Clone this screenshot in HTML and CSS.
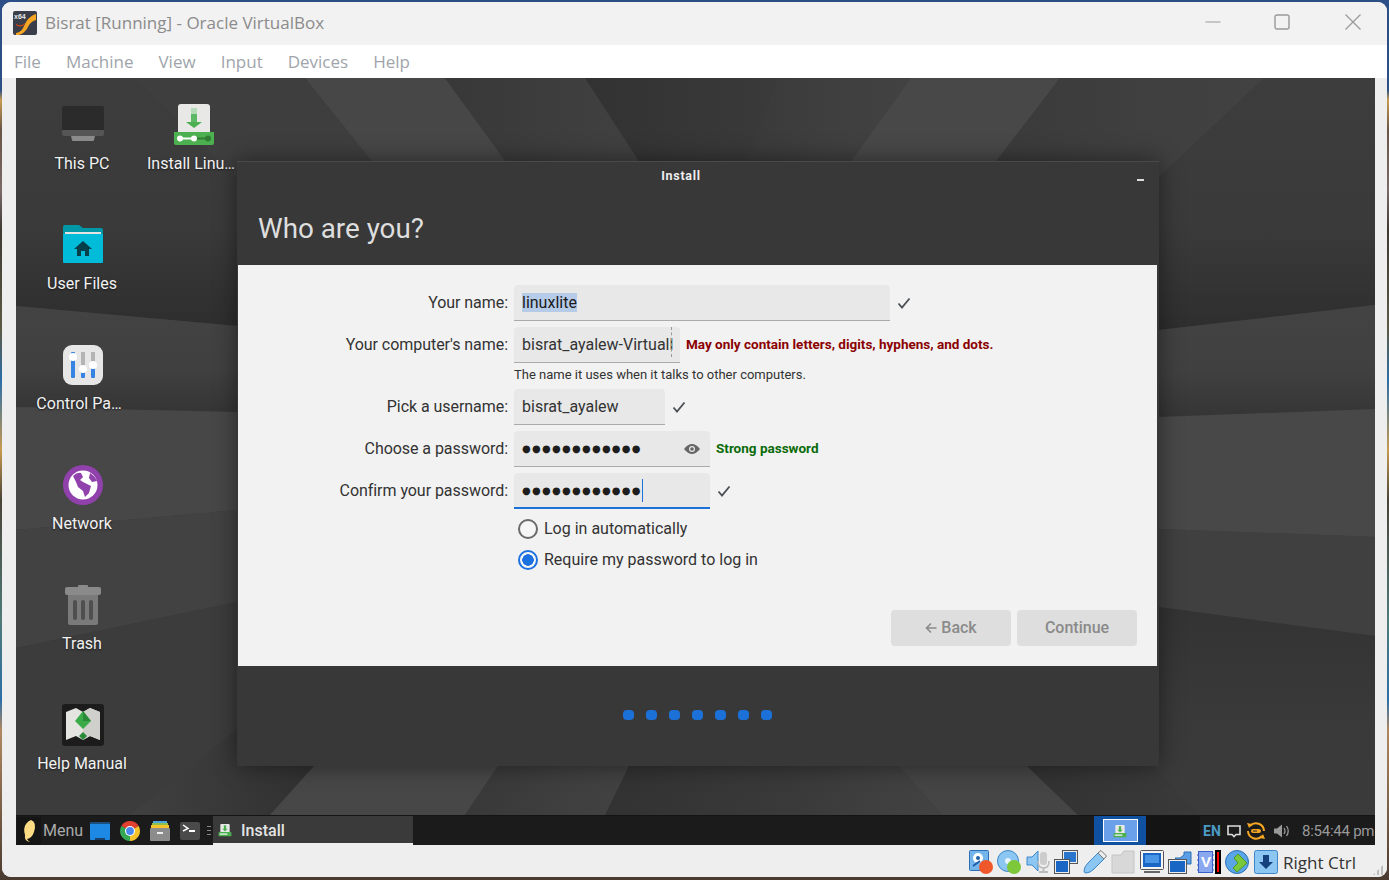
FILE: index.html
```html
<!doctype html>
<html lang="en">
<head>
	<meta charset="utf-8">
	<title>Bisrat [Running] - Oracle VirtualBox</title>
	<link rel="stylesheet" href="styles.css">
</head>
<body>
<div class="window">

	<div class="titlebar">
		<svg class="app-icon" viewBox="0 0 24 24">
			<rect width="24" height="24" rx="2" fill="#3a3d4a"/>
			<path d="M3 22 C9 21 10 17 12 13 C14 9 17 5 23 3 L23 9 C19 10 17 12 15 16 C13 20 9 24 5 24 L3 24 Z" fill="#f6a623"/>
			<path d="M3 13 Q8 16 12 12 L11 14 Q7 17 3 14 Z" fill="#d9480f"/>
			<text x="1" y="8" class="app-icon-text">x64</text>
		</svg>
		<span class="title">Bisrat [Running] - Oracle VirtualBox</span>
		<div class="win-buttons">
			<svg width="16" height="16" viewBox="0 0 16 16"><path d="M0.5 8H15.5" stroke="#999" stroke-width="1" fill="none"/></svg>
			<svg width="16" height="16" viewBox="0 0 16 16"><rect x="1" y="1" width="14" height="14" rx="2" stroke="#999" stroke-width="1.4" fill="none"/></svg>
			<svg width="16" height="16" viewBox="0 0 16 16"><path d="M0.5 0.5L15.5 15.5M15.5 0.5L0.5 15.5" stroke="#999" stroke-width="1.2" fill="none"/></svg>
		</div>
	</div>

	<div class="menubar">
		<span>File</span><span>Machine</span><span>View</span><span>Input</span><span>Devices</span><span>Help</span>
	</div>

	<div class="desktop">
		<svg class="wallpaper" viewBox="16 78 1359 767" preserveAspectRatio="none">
			<defs>
				<linearGradient id="toDark" x1="0" y1="0" x2="1" y2="0"><stop offset="0" stop-color="#404040"/><stop offset="1" stop-color="#313131"/></linearGradient>
				<linearGradient id="fromDark" x1="0" y1="0" x2="1" y2="0"><stop offset="0" stop-color="#383838"/><stop offset="0.6" stop-color="#3f3f3f"/><stop offset="1" stop-color="#424242"/></linearGradient>
				<linearGradient id="valley" x1="0" y1="0" x2="1" y2="0"><stop offset="0" stop-color="#323232"/><stop offset="1" stop-color="#3a3a3a"/></linearGradient>
				<linearGradient id="downDark" x1="0" y1="0" x2="0" y2="1"><stop offset="0" stop-color="#3d3d3d"/><stop offset="0.6" stop-color="#3a3a3a"/><stop offset="1" stop-color="#2e2e2e"/></linearGradient>
				<linearGradient id="downMid" x1="0" y1="0" x2="0" y2="1"><stop offset="0" stop-color="#434343"/><stop offset="0.6" stop-color="#404040"/><stop offset="1" stop-color="#353535"/></linearGradient>
				<linearGradient id="downSoft" x1="0" y1="0" x2="0" y2="1"><stop offset="0" stop-color="#333333"/><stop offset="0.5" stop-color="#393939"/><stop offset="1" stop-color="#3b3b3b"/></linearGradient>
			</defs>
			<rect x="16" y="78" width="1359" height="767" fill="#3a3a3a"/>
			<!-- top rays -->
			<polygon points="16,78 134,78 300,240 237,326 16,306" fill="url(#downDark)"/>
			<polygon points="134,78 305,78 435,240 300,240" fill="#3e3e3e"/>
			<polygon points="305,78 445,78 563,240 435,240" fill="#474747"/>
			<polygon points="445,78 585,78 690,240 563,240" fill="url(#fromDark)"/>
			<polygon points="585,78 778,78 717,240 690,240" fill="url(#valley)"/>
			<polygon points="778,78 911,78 794,240 717,240" fill="url(#fromDark)"/>
			<polygon points="911,78 1060,78 936,240 794,240" fill="#484848"/>
			<polygon points="1060,78 1264,78 1092,240 936,240" fill="url(#fromDark)"/>
			<!-- right bands -->
			<polygon points="1264,78 1375,78 1375,305 1159,330 1092,240" fill="url(#downDark)"/>
			<polygon points="1159,330 1375,305 1375,409 1159,417" fill="url(#downMid)"/>
			<polygon points="1159,417 1375,409 1375,537 1159,529" fill="#484848"/>
			<polygon points="1159,529 1375,537 1375,636 1159,607" fill="#404040"/>
			<polygon points="1159,607 1375,636 1375,815 1200,815 1154,766" fill="url(#downSoft)"/>
			<!-- left bands -->
			<polygon points="16,306 237,326 237,412 16,407" fill="url(#downMid)"/>
			<polygon points="16,407 237,412 237,510 16,530" fill="#474747"/>
			<polygon points="16,530 237,510 237,602 16,648" fill="#424242"/>
			<polygon points="16,648 237,602 237,729 130,815 16,815" fill="#3c3c3c"/>
			<!-- bottom rays -->
			<polygon points="130,815 237,729 237,766 314,766 270,815" fill="url(#toDark)"/>
			<polygon points="270,815 314,766 498,766 465,815" fill="#474747"/>
			<polygon points="465,815 498,766 629,766 605,815" fill="url(#fromDark)"/>
			<polygon points="605,815 629,766 769,766 795,815" fill="url(#valley)"/>
			<polygon points="795,815 769,766 899,766 942,815" fill="url(#fromDark)"/>
			<polygon points="942,815 899,766 1027,766 1078,815" fill="#454545"/>
			<polygon points="1078,815 1027,766 1154,766 1200,815" fill="url(#valley)"/>
		</svg>

		<div class="icons">
			<div class="icon">
				<svg width="48" height="48" viewBox="0 0 48 48">
					<rect x="3" y="5" width="42" height="29" rx="2" fill="#2b2b2b"/>
					<path d="M3 29H45V33a2 2 0 0 1-2 2H5a2 2 0 0 1-2-2Z" fill="#555"/>
					<path d="M12 35H36L35 39a1 1 0 0 1-1 1H14a1 1 0 0 1-1-1Z" fill="#8a8a8a"/>
				</svg>
				<span>This PC</span>
			</div>
			<div class="icon">
				<svg width="48" height="48" viewBox="0 0 48 48">
					<path d="M4 6a2 2 0 0 1 2-2H20L24 7H42a2 2 0 0 1 2 2V42H4Z" fill="#0097a7"/>
					<rect x="6" y="11" width="36" height="4" fill="#e4e4e4"/>
					<path d="M4 13H44V40a2 2 0 0 1-2 2H6a2 2 0 0 1-2-2Z" fill="#00bcd8"/>
					<path d="M24 20L33 28H30V35H26V30H22V35H18V28H15Z" fill="#063e4a"/>
				</svg>
				<span>User Files</span>
			</div>
			<div class="icon">
				<svg width="48" height="48" viewBox="0 0 48 48">
					<rect x="4" y="4" width="40" height="40" rx="9" fill="#e6e6e6"/>
					<rect x="12" y="11" width="4" height="26" rx="1" fill="#3584e4"/>
					<rect x="22" y="11" width="4" height="15" fill="#b4b4b4"/>
					<rect x="22" y="26" width="4" height="11" rx="1" fill="#3584e4"/>
					<rect x="32" y="11" width="4" height="11" fill="#b4b4b4"/>
					<rect x="32" y="22" width="4" height="15" rx="1" fill="#3584e4"/>
					<circle cx="14" cy="16" r="4" fill="#fff"/>
					<circle cx="24" cy="28" r="4" fill="#fff"/>
					<circle cx="34" cy="24" r="4" fill="#fff"/>
				</svg>
				<span class="trunc">Control Pa…</span>
			</div>
			<div class="icon">
				<svg width="48" height="48" viewBox="0 0 48 48">
					<circle cx="24" cy="24" r="20" fill="#9141ac"/>
					<circle cx="24" cy="24" r="14.5" fill="#fff"/>
					<path d="M14 15Q18 11 22 12L24 16L21 19L24 21L32 25L30 32L26 36L24 30L19 26L17 21Z" fill="#9141ac"/>
					<path d="M31 12Q36 15 38 20L33 21L30 17Z" fill="#9141ac"/>
				</svg>
				<span>Network</span>
			</div>
			<div class="icon">
				<svg width="48" height="48" viewBox="0 0 48 48">
					<rect x="19" y="4" width="10" height="4" rx="1" fill="#8a8a8a"/>
					<rect x="6" y="6" width="36" height="8" rx="2" fill="#8a8a8a"/>
					<path d="M9 14H39V42a2 2 0 0 1-2 2H11a2 2 0 0 1-2-2Z" fill="#7a7a7a"/>
					<rect x="14" y="19" width="4" height="20" rx="2" fill="#4f4f4f"/>
					<rect x="22" y="19" width="4" height="20" rx="2" fill="#4f4f4f"/>
					<rect x="30" y="19" width="4" height="20" rx="2" fill="#4f4f4f"/>
				</svg>
				<span>Trash</span>
			</div>
			<div class="icon">
				<svg width="48" height="48" viewBox="0 0 48 48">
					<rect x="3" y="3" width="42" height="42" rx="3" fill="#1c1c1c"/>
					<path d="M7 11L17 7L24 11L31 7L41 11V39L31 35L24 39L17 35L7 39Z" fill="#e4e4e0"/>
					<path d="M24 11L31 7L41 11V39L31 35L24 39Z" fill="#cfcfcb"/>
					<path d="M24 10L32 20L24 28L16 20Z" fill="#3bab4a"/>
					<path d="M24 10L32 20H24Z" fill="#2a8a38"/>
					<path d="M24 31L28 35L24 39L20 35Z" fill="#2a8a38"/>
				</svg>
				<span>Help Manual</span>
			</div>
			<div class="icon">
				<svg width="48" height="48" viewBox="0 0 48 48">
					<path d="M8 6a3 3 0 0 1 3-3H37a3 3 0 0 1 3 3V32H8Z" fill="#e8e8e6"/>
					<rect x="21" y="7" width="6" height="6" fill="#b5dcb8"/>
					<rect x="21" y="13" width="6" height="8" fill="#5db865"/>
					<path d="M16 21H32L24 27Z" fill="#4caf50"/>
					<path d="M4 31H44V42a2 2 0 0 1-2 2H6a2 2 0 0 1-2-2Z" fill="#4caf50"/>
					<path d="M10 37.500H24" stroke="#fff" stroke-width="2"/>
					<path d="M24 37.500H38" stroke="#2e7d32" stroke-width="2"/>
					<circle cx="10" cy="37.500" r="3" fill="#fff"/>
					<circle cx="24" cy="37.500" r="3" fill="#fff"/>
					<circle cx="38" cy="37.500" r="3" fill="#2e7d32"/>
				</svg>
				<span class="trunc">Install Linu…</span>
			</div>
		</div>

		<div class="dialog">
			<div class="dialog-title">Install<span class="dialog-min"></span></div>
			<h1>Who are you?</h1>
			<div class="content">
				<div class="row">
					<label>Your name:</label>
					<div class="field f-name"><span class="selected">linuxlite</span></div>
					<svg class="check" viewBox="0 0 14 14"><path d="M1.500 7.500L5 11.500L12.500 2.500" /></svg>
				</div>
				<div class="row">
					<label>Your computer's name:</label>
					<div class="field f-host">bisrat_ayalew-Virtuall</div>
					<span class="msg-error">May only contain letters, digits, hyphens, and dots.</span>
				</div>
				<p class="hint">The name it uses when it talks to other computers.</p>
				<div class="row">
					<label>Pick a username:</label>
					<div class="field f-user">bisrat_ayalew</div>
					<svg class="check" viewBox="0 0 14 14"><path d="M1.500 7.500L5 11.500L12.500 2.500" /></svg>
				</div>
				<div class="row">
					<label>Choose a password:</label>
					<div class="field f-pass">
						<span class="dots">●●●●●●●●●●●●</span>
						<svg class="eye" viewBox="0 0 16 10"><path d="M0 5Q8 -5 16 5Q8 15 0 5Z" fill="#666"/><circle cx="8" cy="5" r="3" fill="#e8e8e8"/><circle cx="8" cy="5" r="1.800" fill="#666"/></svg>
					</div>
					<span class="msg-ok">Strong password</span>
				</div>
				<div class="row">
					<label>Confirm your password:</label>
					<div class="field f-pass focused">
						<span class="dots">●●●●●●●●●●●●</span><span class="caret"></span>
					</div>
					<svg class="check" viewBox="0 0 14 14"><path d="M1.500 7.500L5 11.500L12.500 2.500" /></svg>
				</div>
				<div class="radio"><span class="bullet"></span>Log in automatically</div>
				<div class="radio"><span class="bullet on"></span>Require my password to log in</div>
				<div class="buttons">
					<div class="btn"><svg class="arrow" viewBox="0 0 12 12"><path d="M11.500 6H1.500M6 1.500L1.500 6L6 10.500"/></svg>Back</div>
					<div class="btn">Continue</div>
				</div>
			</div>
			<div class="progress-dots">
				<i></i><i></i><i></i><i></i><i></i><i></i><i></i>
			</div>
		</div>

		<div class="taskbar">
			<div class="menu-logo">
				<svg width="24" height="26" viewBox="0 0 24 26"><path d="M14 2Q20 4 17 14Q15 20 10 21Q11 23 13 24Q7 23 8 17Q6 10 9 6Q11 3 14 2Z" fill="#fbdc85"/></svg>
			</div>
			<span class="menu-text">Menu</span>
			<div class="launchers">
				<svg width="20" height="20" viewBox="0 0 20 20"><rect y="1" width="20" height="18" rx="1" fill="#1e88e5"/><rect y="1" width="20" height="2" fill="#1a4f80"/><rect x="5" y="17" width="10" height="2" fill="#17406a"/></svg>
				<svg width="20" height="20" viewBox="0 0 20 20"><path d="M10 10L1.340 5A10 10 0 0 1 18.660 5Z" fill="#e2402f"/><path d="M10 10L18.660 5A10 10 0 0 1 10 20Z" fill="#f7c32c"/><path d="M10 10L10 20A10 10 0 0 1 1.340 5Z" fill="#34a853"/><circle cx="10" cy="10" r="5" fill="#fff"/><circle cx="10" cy="10" r="3.900" fill="#4a87ee"/></svg>
				<svg width="20" height="20" viewBox="0 0 20 20"><rect x="3" y="0" width="14" height="3" fill="#4fa3e0"/><rect x="2" y="2" width="16" height="2" fill="#8bc34a"/><rect x="1" y="4" width="18" height="3" fill="#f7c32c"/><rect y="7" width="20" height="13" rx="1" fill="#8c8c8c"/><rect x="7" y="11" width="6" height="2" fill="#eee"/></svg>
				<svg width="20" height="18" viewBox="0 0 20 18"><rect width="20" height="18" rx="2" fill="#4a4a4a"/><path d="M3 3L8 6.500L3 9" stroke="#fff" stroke-width="1.500" fill="none"/><rect x="9" y="8" width="6" height="2" fill="#fff"/></svg>
			</div>
			<span class="sep"></span>
			<div class="task">
				<svg width="14" height="14" viewBox="0 0 48 48">
					<path d="M8 6a3 3 0 0 1 3-3H37a3 3 0 0 1 3 3V32H8Z" fill="#e8e8e6"/>
					<path d="M20 8H28V20H33L24 29L15 20H20Z" fill="#4caf50"/>
					<rect x="2" y="31" width="44" height="14" rx="2" fill="#4caf50"/>
					<rect x="6" y="36" width="26" height="4" fill="#fff"/>
				</svg>
				Install
			</div>
			<div class="workspace">
				<div class="ws-box">
					<svg width="14" height="14" viewBox="0 0 48 48">
						<path d="M8 6a3 3 0 0 1 3-3H37a3 3 0 0 1 3 3V32H8Z" fill="#e8e8e6"/>
						<path d="M20 8H28V20H33L24 29L15 20H20Z" fill="#4caf50"/>
						<rect x="2" y="31" width="44" height="14" rx="2" fill="#4caf50"/>
						<rect x="6" y="36" width="26" height="4" fill="#fff"/>
					</svg>
				</div>
			</div>
			<div class="ws-empty"></div>
			<div class="tray">
				<span class="lang">EN</span>
				<svg width="14" height="14" viewBox="0 0 14 14"><path d="M1 2H13V10.500H9L7 12.500L5 10.500H1Z" fill="none" stroke="#ddd" stroke-width="1.600"/></svg>
				<svg class="tray-update" width="20" height="20" viewBox="0 0 20 20">
					<path d="M4 5A8 8 0 0 1 18 10" fill="none" stroke="#f5a623" stroke-width="2"/>
					<path d="M16 15A8 8 0 0 1 2 10" fill="none" stroke="#f5a623" stroke-width="2"/>
					<path d="M1 2L6 3L3 7Z" fill="#f5a623"/>
					<path d="M19 18L14 17L17 13Z" fill="#f5a623"/>
					<rect x="5" y="8" width="10" height="4" rx="2" fill="#f5a623"/>
					<rect x="7" y="9.500" width="4" height="1" fill="#222"/>
				</svg>
				<svg class="tray-sound" width="16" height="14" viewBox="0 0 16 14"><path d="M0 4.500H3L8 0.500V13.500L3 9.500H0Z" fill="#999"/><path d="M10 4Q12 7 10 10M12.500 2Q16 7 12.500 12" fill="none" stroke="#999" stroke-width="1.300"/></svg>
				<span class="clock">8:54:44 pm</span>
			</div>
		</div>
	</div>

	<div class="statusbar">
		<!-- hard disk -->
		<svg width="24" height="24" viewBox="0 0 24 24"><rect x="0.500" y="0.500" width="19" height="20" rx="1" fill="#74b5ec" stroke="#2a6fb8"/><circle cx="9" cy="8" r="5" fill="#fff"/><circle cx="9" cy="8" r="2" fill="#1e5fa8"/><path d="M4 16L11 11" stroke="#1e5fa8" stroke-width="2"/><circle cx="17" cy="17" r="7" fill="#f0572a"/></svg>
		<!-- optical -->
		<svg width="24" height="24" viewBox="0 0 24 24"><circle cx="11" cy="11" r="10.500" fill="#8cc6f2" stroke="#3d86c8"/><circle cx="11" cy="11" r="3" fill="#e8f4fd"/><circle cx="17" cy="17" r="7" fill="#7cc83a"/></svg>
		<!-- audio -->
		<svg width="24" height="24" viewBox="0 0 24 24"><path d="M1 7H6L12 1V21L6 15H1Z" fill="#8cc6f2" stroke="#3d86c8"/><rect x="14" y="2" width="7" height="13" rx="3" fill="#ccc"/><path d="M12 11Q12 18 17.500 18Q23 18 23 11" fill="none" stroke="#bbb" stroke-width="1.500"/><rect x="13" y="21" width="9" height="2" fill="#bbb"/><rect x="16.500" y="18" width="2" height="4" fill="#bbb"/></svg>
		<!-- network -->
		<svg width="24" height="24" viewBox="0 0 24 24"><rect x="8.500" y="0.500" width="15" height="13" fill="#eee" stroke="#555"/><rect x="10" y="2" width="12" height="10" fill="#2a76cc"/><rect x="0.500" y="9.500" width="15" height="14" fill="#eee" stroke="#555"/><rect x="2" y="11" width="12" height="11" fill="#1a66c4"/></svg>
		<!-- usb -->
		<svg width="24" height="24" viewBox="0 0 24 24"><path d="M15 3L21 9L11 19Q7 23 3 23Q1 23 1 21Q1 17 5 13Z" fill="#8cc6f2" stroke="#3d86c8"/><path d="M15 3L18 0.500L23.500 6L21 9Z" fill="#eee" stroke="#777"/></svg>
		<!-- shared folder -->
		<svg width="24" height="24" viewBox="0 0 24 24"><path d="M1 5H10L13 1H23V23H1Z" fill="#d8d8d8" stroke="#c4c4c4"/></svg>
		<!-- display -->
		<svg width="24" height="24" viewBox="0 0 24 24"><rect x="0.500" y="0.500" width="23" height="19" rx="1" fill="#f4f4f4" stroke="#555"/><rect x="3" y="3" width="18" height="14" fill="#1a66c4"/><rect x="5" y="5" width="14" height="8" fill="#4a96e6"/><path d="M4 22H20" stroke="#666" stroke-width="2"/></svg>
		<!-- capture -->
		<svg width="24" height="24" viewBox="0 0 24 24"><path d="M7 8H12L16 5V2H23V14H16V11L12 12Z" fill="#5a9fe6" stroke="#2a6fb8"/><rect x="0.500" y="9.500" width="18" height="14" fill="#eee" stroke="#555"/><rect x="2" y="11" width="15" height="11" fill="#1a66c4"/></svg>
		<!-- vt-x + cpu load -->
		<svg class="st-cpu" width="24" height="24" viewBox="0 0 24 24"><rect x="1.500" y="1.500" width="14" height="21" fill="#8aa8f0" stroke="#3a5fc8"/><path d="M1.500 5H0M1.500 10H0M1.500 15H0M1.500 20H0M15.500 5H17M15.500 10H17M15.500 15H17M15.500 20H17" stroke="#3a5fc8"/><text x="4" y="17" class="cpu-text">V</text><rect x="18" y="0" width="6" height="24" fill="#000"/><rect x="20" y="2" width="2" height="20" fill="#f00"/></svg>
		<!-- mouse integration -->
		<svg width="24" height="24" viewBox="0 0 24 24"><circle cx="12" cy="12" r="11.500" fill="#5aa5e8" stroke="#2a6fb8"/><path d="M13 4L22 13L12 22L8 18L13 13L9 8Z" fill="#7ac83c" stroke="#4f9a20"/></svg>
		<!-- keyboard capture -->
		<svg width="24" height="24" viewBox="0 0 24 24"><rect x="0.500" y="0.500" width="23" height="23" rx="2" fill="#8cc6f2" stroke="#3d86c8"/><path d="M9 5H15V12H19L12 19L5 12H9Z" fill="#15427e"/></svg>
		<span class="hostkey">Right Ctrl</span>
		<span class="grip"></span>
	</div>
</div>
</body>
</html>
```

FILE: styles.css
```css
html, body {
	margin: 0;
	height: 100%;
}
body {
	overflow: hidden;
	background: linear-gradient(#2b4f86 0, #2b4f86 90px, #c79a50 100px, #6a5646 130px, #7a6a68 190px, #3f3a33 230px, #5d5a45 330px, #2c6fa8 380px, #c79a50 450px, #4a4438 500px, #4f7a78 620px, #2c6fa8 700px, #b08860 730px, #4a3a30 880px);
}
svg {
	display: block;
	flex: none;
}

.window {
	margin: 2px 2px 0;
	height: 875px;
	display: flex;
	flex-direction: column;
	background: #eeeeee;
	border-radius: 9px;
	overflow: hidden;
	font-family: "Roboto", sans-serif;
}

/* title and menu */
.titlebar {
	height: 43px;
	flex: none;
	display: flex;
	align-items: center;
	padding-left: 11px;
	background: #f2f2f2;
}
.app-icon {
	width: 24px;
	height: 24px;
	margin-top: -2px;
}
.app-icon-text {
	font: bold 7px "Liberation Sans", sans-serif;
	fill: #e8e8e8;
}
.title {
	margin-left: 8px;
	margin-top: -3px;
	font: 17px "Open Sans", sans-serif;
	color: #8b8b8b;
	white-space: nowrap;
}
.win-buttons {
	margin-left: auto;
	margin-top: -3px;
	display: flex;
	gap: 55px;
	padding-right: 26px;
}
.win-buttons svg:first-child {
	margin-right: -2px;
}
.menubar {
	height: 33px;
	flex: none;
	display: flex;
	align-items: center;
	gap: 25px;
	padding-left: 12px;
	background: #ffffff;
	font: 17px "Open Sans", sans-serif;
	color: #a0a4aa;
}

/* guest desktop */
.desktop {
	position: relative;
	height: 767px;
	flex: none;
	margin: 0 12px 0 14px;
	display: flex;
	flex-direction: column;
	overflow: hidden;
}
.wallpaper {
	position: absolute;
	left: 0;
	top: 0;
	width: 100%;
	height: 100%;
}
.icons {
	position: relative;
	height: 737px;
	flex: none;
	box-sizing: border-box;
	display: grid;
	grid-auto-flow: column;
	grid-template-rows: repeat(6, 120px);
	grid-template-columns: repeat(2, 112px);
	justify-content: start;
	padding: 23px 0 0 10px;
}
.icon {
	display: flex;
	flex-direction: column;
	align-items: center;
	color: #f2f2f2;
	font-size: 16px;
	line-height: 20px;
	white-space: nowrap;
	text-shadow: 0 1px 2px rgba(0, 0, 0, 0.6);
}
.icon svg {
	margin-left: 2px;
}
.icon:last-child svg {
	margin-left: 0;
}
.icon span {
	margin-top: 5px;
}
.icon .trunc {
	margin-right: 6px;
}

/* installer window */
.dialog {
	position: absolute;
	left: 221px;
	top: 83px;
	width: 922px;
	height: 605px;
	box-sizing: border-box;
	display: flex;
	flex-direction: column;
	background: #383838;
	border-top: 1px solid #4a4a4a;
	box-shadow: 0 0 22px rgba(0, 0, 0, 0.45);
}
.dialog-title {
	position: relative;
	height: 28px;
	padding-right: 34px;
	line-height: 28px;
	text-align: center;
	font-size: 12.5px;
	font-weight: 700;
	letter-spacing: 0.7px;
	color: #eeeeee;
}
.dialog-min {
	position: absolute;
	right: 15px;
	top: 17px;
	width: 7px;
	height: 2px;
	background: #dddddd;
}
h1 {
	margin: 0;
	height: 75px;
	padding: 22px 0 0 21px;
	box-sizing: border-box;
	font-size: 27.8px;
	font-weight: 400;
	line-height: 34px;
	color: #dedede;
}
.content {
	height: 401px;
	margin: 0 2px 0 1px;
	box-sizing: border-box;
	padding-top: 20px;
	display: flex;
	flex-direction: column;
	gap: 6px;
	background: #f2f2f2;
	color: #333333;
	font-size: 16px;
}
.row {
	display: flex;
	align-items: center;
	gap: 6px;
}
.row label {
	width: 270px;
	flex: none;
	padding-bottom: 2px;
	text-align: right;
	letter-spacing: -0.05px;
}
.field {
	position: relative;
	height: 36px;
	box-sizing: border-box;
	padding: 0 8px;
	display: flex;
	align-items: center;
	background: #e8e8e8;
	border-bottom: 1px solid #aaaaaa;
	border-radius: 4px 4px 0 0;
	white-space: nowrap;
	overflow: hidden;
}
.f-name { width: 376px; }
.f-host { width: 166px; }
.f-host::after {
	content: "";
	position: absolute;
	right: 8px;
	top: 0;
	height: 30px;
	border-right: 1px dashed #999999;
}
.f-user { width: 151px; }
.f-pass { width: 196px; }
.focused {
	border-bottom: 2px solid #1c71d8;
}
.selected {
	background: #b5cbe8;
	color: #1a1a1a;
	line-height: 19px;
}
.check {
	width: 14px;
	height: 14px;
	margin-left: 1px;
}
.check path {
	fill: none;
	stroke: #4a4f55;
	stroke-width: 1.8;
}
.msg-error {
	padding-bottom: 2px;
	font-size: 13.5px;
	font-weight: 700;
	color: #8b0000;
}
.msg-ok {
	padding-bottom: 2px;
	font-size: 13.5px;
	font-weight: 700;
	color: #0b6b0b;
}
.hint {
	margin: -4px 0 -2px 276px;
	font-size: 13px;
	line-height: 20px;
	height: 20px;
	color: #333333;
}
.dots {
	font: 10px "DejaVu Sans", sans-serif;
	letter-spacing: 1.26px;
	color: #1d1d1d;
}
.eye {
	position: absolute;
	right: 10px;
	top: 13px;
	width: 16px;
	height: 10px;
}
.caret {
	width: 1px;
	height: 23px;
	background: #1c71d8;
}
.radio {
	display: flex;
	align-items: center;
	gap: 6px;
	height: 25px;
	padding-left: 280px;
}
.row + .radio {
	margin-top: 1px;
}
.bullet {
	width: 20px;
	height: 20px;
	box-sizing: border-box;
	border: 2px solid #6a6a6a;
	border-radius: 50%;
	background: #f6f6f6;
}
.bullet.on {
	border-color: #1c71e0;
	background: radial-gradient(circle, #1c71e0 0, #1c71e0 5.5px, #f6f6f6 6px);
}
.buttons {
	margin-top: auto;
	padding: 0 20px 20px 0;
	display: flex;
	justify-content: flex-end;
	gap: 6px;
}
.btn {
	width: 120px;
	height: 36px;
	box-sizing: border-box;
	padding-bottom: 2px;
	display: flex;
	align-items: center;
	justify-content: center;
	gap: 4px;
	background: #dedede;
	border-radius: 4px;
	color: #8a8a8a;
	font-weight: 500;
}
.arrow {
	width: 12px;
	height: 12px;
	margin-top: 2px;
}
.arrow path {
	fill: none;
	stroke: #8a8a8a;
	stroke-width: 1.6;
}
.progress-dots {
	flex: 1;
	display: flex;
	align-items: center;
	justify-content: center;
	gap: 12px;
	margin-left: -2px;
	padding-bottom: 2px;
}
.progress-dots i {
	width: 11px;
	height: 10px;
	border-radius: 4px;
	background: #1c71d8;
}

/* guest panel */
.taskbar {
	position: relative;
	height: 30px;
	flex: none;
	box-sizing: border-box;
	display: flex;
	align-items: center;
	background: #1b1b1b;
	border-top: 1px solid #141414;
	color: #aaaaaa;
	font-size: 16px;
}
.menu-logo {
	margin-left: 1px;
	width: 24px;
	height: 28px;
	background: #151515;
	display: flex;
	align-items: center;
}
.menu-text {
	margin-left: 2px;
	width: 47px;
}
.launchers {
	display: flex;
	align-items: center;
	gap: 10px;
}
.sep {
	margin-left: 7px;
	width: 4px;
	height: 9px;
	background: repeating-linear-gradient(#888 0, #888 1px, transparent 1px, transparent 4px);
}
.task {
	margin-left: 2px;
	width: 200px;
	height: 29px;
	box-sizing: border-box;
	padding: 1px 0 0 5px;
	display: flex;
	align-items: center;
	gap: 9px;
	background: #3a3a3a;
	border-bottom: 2px solid #eeeeee;
	color: #e4e4e4;
	font-weight: 500;
}
.workspace {
	margin-left: auto;
	width: 52px;
	height: 29px;
	display: flex;
	align-items: center;
	justify-content: center;
	background: #1050a0;
}
.ws-box {
	width: 35px;
	height: 23px;
	box-sizing: border-box;
	display: flex;
	align-items: center;
	justify-content: center;
	background: #6aa0ea;
	border: 1px solid #ffffff;
}
.ws-empty {
	width: 54px;
	height: 29px;
	background: #141414;
}
.tray {
	width: 175px;
	display: flex;
	align-items: center;
	padding-left: 3px;
	box-sizing: border-box;
	white-space: nowrap;
	overflow: hidden;
}
.lang {
	flex: none;
	width: 24px;
	font-size: 14px;
	font-weight: 700;
	letter-spacing: 0.2px;
	color: #4a9cc7;
}
.tray-update {
	margin-left: 5px;
}
.tray-sound {
	margin-left: 8px;
}
.clock {
	flex: none;
	margin-left: 12px;
	font-size: 15px;
	letter-spacing: -0.25px;
	color: #999999;
}

/* VirtualBox status bar */
.statusbar {
	position: relative;
	flex: 1;
	box-sizing: border-box;
	display: flex;
	align-items: center;
	justify-content: flex-end;
	gap: 4.5px;
	padding: 2px 31px 0 0;
	background: #eeeeee;
}
.cpu-text {
	font: bold 15px "Liberation Sans", sans-serif;
	fill: #fff;
}
.hostkey {
	margin-left: 1px;
	font: 17px "Open Sans", sans-serif;
	color: #333333;
}
.grip {
	position: absolute;
	right: 2px;
	bottom: 2px;
	width: 12px;
	height: 12px;
	background: repeating-linear-gradient(90deg, #bbbbbb 0, #bbbbbb 2px, transparent 2px, transparent 4px);
	clip-path: polygon(100% 0, 100% 100%, 0 100%);
}
```
